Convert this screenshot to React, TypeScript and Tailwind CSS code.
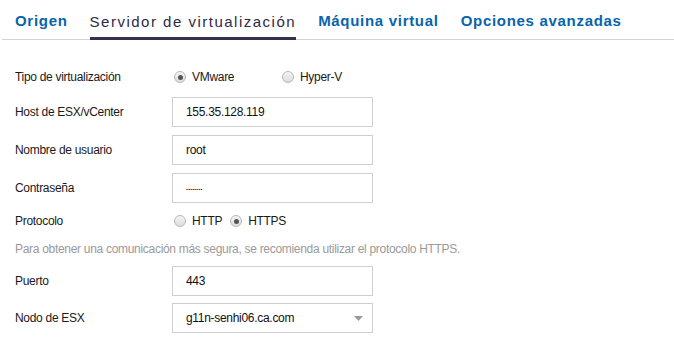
import { useState } from 'react';

const tabs = ['Origen', 'Servidor de virtualización', 'Máquina virtual', 'Opciones avanzadas'];

const Radio = ({ checked, label, className }: { checked: boolean; label: string; className?: string }) => (
    <label className={`flex items-center gap-[6px] ${className ?? ''}`}>
        <span className="w-[12px] h-[12px] rounded-full border border-[#b8b8b8] bg-gradient-to-b from-[#f4f4f4] to-[#dcdcdc] flex items-center justify-center">
            {checked && <span className="w-[5px] h-[5px] rounded-full bg-[#555]" />}
        </span>
        <span>{label}</span>
    </label>
);

const Row = ({ label, children }: { label: string; children: React.ReactNode }) => (
    <div className="flex items-center">
        <div className="w-[157px] shrink-0">{label}</div>
        {children}
    </div>
);

const TextBox = ({ value, small }: { value: string; small?: boolean }) => (
    <div
        className={`w-[201px] h-[30px] border border-[#cfcfcf] bg-white flex items-center pl-[13px] text-[#111] ${
            small ? 'text-[8px] tracking-[-0.2px] font-bold' : ''
        }`}>
        {value}
    </div>
);

export default function App() {
    const [active] = useState(1);

    return (
        <div className="w-[674px] h-[343px] bg-white overflow-hidden font-['Liberation_Sans',sans-serif]">
            <div className="flex items-end gap-[22px] pl-[13px] border-b border-[#d4d4d8] ml-[2px] h-[40px]">
                {tabs.map((tab, i) => (
                    <div
                        key={tab}
                        className={
                            i === active
                                ? 'pb-[4px] border-b-[3px] border-[#34304d] text-[#2e2a45] text-[15px] tracking-[1.5px] mb-[-1px]'
                                : 'pb-[7px] text-[#0864ac] text-[15px] tracking-[0.7px] font-semibold'
                        }>
                        {tab}
                    </div>
                ))}
            </div>
            <div className="pl-[15px] text-[12px] text-[#1a1a1a] tracking-[-0.3px] flex flex-col">
                <div className="mt-[29px] flex items-center h-[16px]">
                    <div className="w-[159px] shrink-0">Tipo de virtualización</div>
                    <div className="flex">
                        <Radio checked label="VMware" className="w-[108px]" />
                        <Radio checked={false} label="Hyper-V" />
                    </div>
                </div>
                <div className="mt-[12px] flex flex-col gap-[8px]">
                    <Row label="Host de ESX/vCenter">
                        <TextBox value="155.35.128.119" />
                    </Row>
                    <Row label="Nombre de usuario">
                        <TextBox value="root" />
                    </Row>
                    <Row label="Contraseña">
                        <TextBox value="........" small />
                    </Row>
                </div>
                <div className="mt-[10px] flex items-center h-[16px]">
                    <div className="w-[159px] shrink-0">Protocolo</div>
                    <div className="flex gap-[8px]">
                        <Radio checked={false} label="HTTP" />
                        <Radio checked label="HTTPS" />
                    </div>
                </div>
                <div className="mt-[11px] text-[#9a9a9a] h-[16px]">
                    Para obtener una comunicación más segura, se recomienda utilizar el protocolo HTTPS.
                </div>
                <div className="mt-[10px] flex flex-col gap-[7px]">
                    <Row label="Puerto">
                        <TextBox value="443" />
                    </Row>
                    <Row label="Nodo de ESX">
                        <div className="w-[201px] h-[30px] border border-[#cfcfcf] bg-white flex items-center justify-between pl-[13px] pr-[9px] text-[#111]">
                            <span>g11n-senhi06.ca.com</span>
                            <svg width="9" height="5" viewBox="0 0 9 5">
                                <path d="M0 0 L9 0 L4.5 5 Z" fill="#9a9a9a" />
                            </svg>
                        </div>
                    </Row>
                </div>
            </div>
        </div>
    );
}
